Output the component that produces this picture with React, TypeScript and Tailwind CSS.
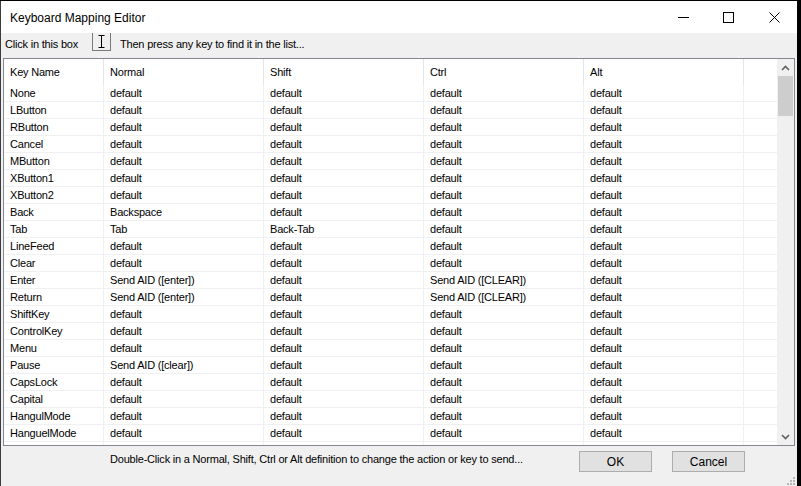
import React from 'react';

type Row = [string, string, string, string, string];

const d = 'default';
const rows: Row[] = [
  ['None', d, d, d, d],
  ['LButton', d, d, d, d],
  ['RButton', d, d, d, d],
  ['Cancel', d, d, d, d],
  ['MButton', d, d, d, d],
  ['XButton1', d, d, d, d],
  ['XButton2', d, d, d, d],
  ['Back', 'Backspace', d, d, d],
  ['Tab', 'Tab', 'Back-Tab', d, d],
  ['LineFeed', d, d, d, d],
  ['Clear', d, d, d, d],
  ['Enter', 'Send AID ([enter])', d, 'Send AID ([CLEAR])', d],
  ['Return', 'Send AID ([enter])', d, 'Send AID ([CLEAR])', d],
  ['ShiftKey', d, d, d, d],
  ['ControlKey', d, d, d, d],
  ['Menu', d, d, d, d],
  ['Pause', 'Send AID ([clear])', d, d, d],
  ['CapsLock', d, d, d, d],
  ['Capital', d, d, d, d],
  ['HangulMode', d, d, d, d],
  ['HanguelMode', d, d, d, d],
  ['', '', '', '', ''],
];

const headers = ['Key Name', 'Normal', 'Shift', 'Ctrl', 'Alt'];
const widths = ['w-[100px]', 'w-[160px]', 'w-[160px]', 'w-[160px]', 'w-[160px]'];

const Chevron = ({ up }: { up?: boolean }) => (
  <svg width="9" height="6" viewBox="0 0 9 6">
    <path
      d={up ? 'M1 5 L4.5 1.5 L8 5' : 'M1 1 L4.5 4.5 L8 1'}
      fill="none"
      stroke="#606060"
      strokeWidth="1.6"
    />
  </svg>
);

export default function App() {
  return (
    <div className="w-[801px] h-[486px] bg-black overflow-hidden" style={{ fontFamily: '"Liberation Sans", Arial, sans-serif' }}>
      <div className="w-[797px] h-[486px] mt-[1px] border-l border-[#3c3c3c] bg-[#f0f0f0] flex flex-col text-black">
        {/* Title bar */}
        <div className="h-[32px] bg-white flex items-center shrink-0">
          <span className="pl-[9px] text-[12px] pt-[1px]">Keyboard Mapping Editor</span>
          <div className="ml-auto flex h-full">
            <div className="w-[46px] flex items-center justify-center">
              <div className="w-[11px] h-px bg-black ml-[2px]" />
            </div>
            <div className="w-[46px] flex items-center justify-center">
              <div className="w-[11px] h-[11px] border border-black" />
            </div>
            <div className="w-[46px] flex items-center justify-center">
              <svg width="11" height="11" viewBox="0 0 11 11">
                <path d="M0.5 0.5 L10.5 10.5 M10.5 0.5 L0.5 10.5" stroke="#000" strokeWidth="1" />
              </svg>
            </div>
          </div>
        </div>

        {/* Key finder */}
        <div className="h-[25px] flex items-start shrink-0 text-[11px] tracking-[-0.2px]">
          <span className="pl-[4px] pt-[3px] w-[91px]">Click in this box</span>
          <div className="w-[19px] h-[18px] border-x border-b border-[#7a7a7a] flex items-center justify-center">
            <svg width="7" height="13" viewBox="0 0 7 13">
              <path d="M0.5 0.5 H6.5 M3.5 0.5 V12.5 M0.5 12.5 H6.5" stroke="#000" strokeWidth="1" fill="none" />
            </svg>
          </div>
          <span className="pl-[9px] pt-[3px]">Then press any key to find it in the list...</span>
        </div>

        {/* List */}
        <div className="mx-[2px] h-[388px] border border-[#828790] bg-white flex shrink-0">
          <div className="flex-1 overflow-hidden text-[11px] tracking-[-0.2px]">
            <div className="flex h-[26px]">
              {headers.map((h, i) => (
                <div key={h} className={`${widths[i]} border-r border-[#e5e5e5] pl-[6px] flex items-center`}>
                  {h}
                </div>
              ))}
            </div>
            {rows.map((r, ri) => (
              <div key={ri} className="flex h-[17px] border-b border-[#f0f0f0]">
                {r.map((c, i) => (
                  <div key={i} className={`${widths[i]} border-r border-[#f0f0f0] pl-[6px] flex items-center`}>
                    {c}
                  </div>
                ))}
              </div>
            ))}
          </div>
          <div className="w-[17px] bg-[#f0f0f0] flex flex-col">
            <div className="h-[17px] flex items-center justify-center">
              <Chevron up />
            </div>
            <div className="h-[40px] mx-px bg-[#cdcdcd]" />
            <div className="flex-1" />
            <div className="h-[17px] flex items-center justify-center">
              <Chevron />
            </div>
          </div>
        </div>

        {/* Bottom */}
        <div className="flex-1 flex items-start relative text-[11px]">
          <span className="pl-[109px] pt-[5px] tracking-[-0.2px]">
            Double-Click in a Normal, Shift, Ctrl or Alt definition to change the action or key to send...
          </span>
          <div className="ml-auto flex gap-[20px] pt-[5px] pr-[52px]">
            <button className="w-[73px] h-[21px] bg-[#e1e1e1] border border-[#adadad] text-[12px] pt-[1px]">OK</button>
            <button className="w-[73px] h-[21px] bg-[#e1e1e1] border border-[#adadad] text-[12px]">Cancel</button>
          </div>
          <svg className="absolute right-[2px] bottom-[2px]" width="9" height="9" viewBox="0 0 9 9">
            {[[7, 1], [7, 4], [4, 4], [7, 7], [4, 7], [1, 7]].map(([x, y], i) => (
              <rect key={i} x={x} y={y} width="2" height="2" fill="#b8b8b8" />
            ))}
          </svg>
        </div>
      </div>
    </div>
  );
}
